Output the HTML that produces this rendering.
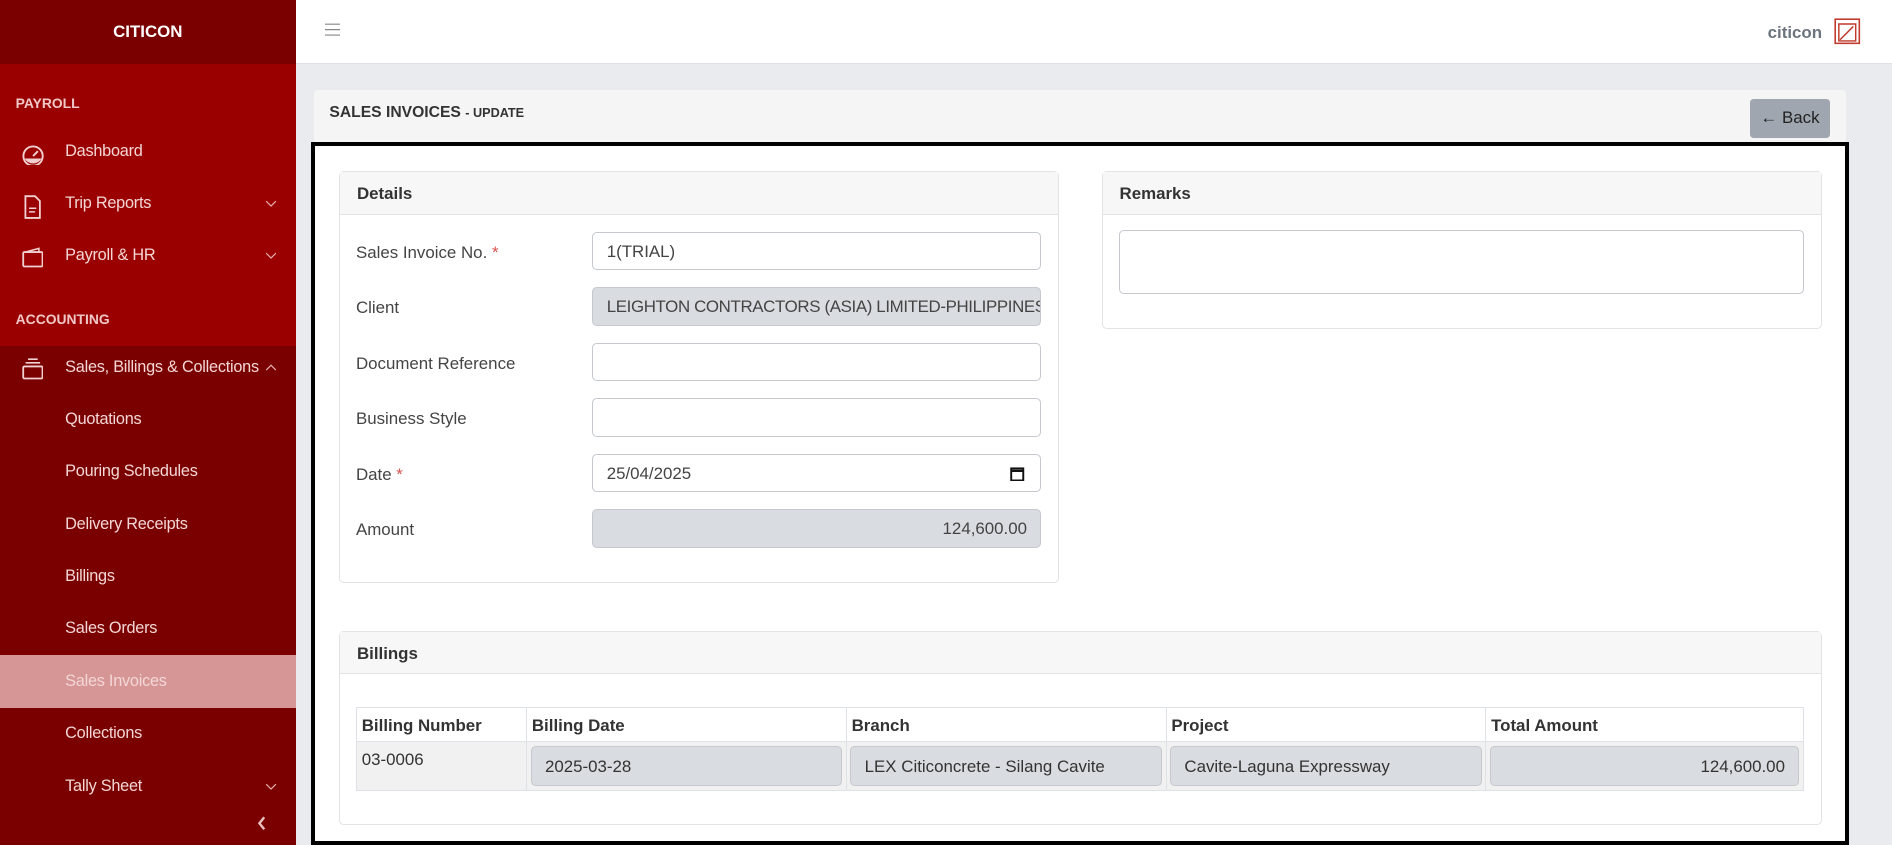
<!DOCTYPE html>
<html><head><meta charset="utf-8"><style>
*{box-sizing:border-box;margin:0;padding:0}
html,body{width:1892px;height:845px;overflow:hidden}
body{font-family:"Liberation Sans",sans-serif;background:#e9ebee;position:relative}
#w{zoom:1.2066;position:relative;width:1568px;height:700px}
.a{position:absolute}
.sb{left:0;top:0;width:245px;height:700px;background:#7a0000}
.sbh{left:0;top:0;width:245px;height:53px;background:#7a0000;color:#fff;font-weight:bold;font-size:14px;text-align:center;line-height:53px}
.sbr{left:0;top:53px;width:245px;height:234px;background:#9b0000}
.sec{color:#f0c8c8;font-weight:bold;font-size:11.5px;left:13px}
.it,.sub{color:#f3d6d6;font-size:13.5px;left:54px;letter-spacing:-0.2px}
.chev{left:220px}
.act{left:0;top:543px;width:245px;height:44px;background:#d69696}
.hdr{left:245px;top:0;width:1323px;height:53px;background:#fff;border-bottom:1px solid #dee2e6}
.ph{left:260px;top:75px;width:1270px;height:45px;background:#f5f5f5;border-radius:3px}
.bx{left:258px;top:118px;width:1274px;height:582px;border:4px solid #000;background:#fff}
.card{border:1px solid #e3e3e3;border-radius:4px;background:#fff}
.ch{background:#f7f7f7;border-bottom:1px solid #e3e3e3;height:35px;line-height:36px;padding-left:14px;font-weight:bold;font-size:14px;color:#333}
.lb{left:295px;font-size:14px;color:#444;margin-top:1px}
.in{left:491px;width:372px;height:32px;border:1px solid #c5c9ce;border-radius:4px;font-size:14px;color:#444;padding-left:11px;line-height:31px;white-space:nowrap;overflow:hidden;background:#fff}
.dis{background:#d9dce0}
.req{color:#d9534f}
table{border-collapse:collapse;font-size:14px;color:#333}
td,th{border:1px solid #dee2e6}
</style></head><body><div id="w">
<div class="a sb"></div>
<div class="a sbr"></div>
<div class="a sbh">CITICON</div>
<div class="a act"></div>
<div class="a sec" style="top:79px">PAYROLL</div>
<div class="a sec" style="top:258px">ACCOUNTING</div>
<svg class="a" style="left:17px;top:119px" width="20" height="18" viewBox="0 0 20 18"><circle cx="10" cy="10" r="8" fill="none" stroke="#f0d0d0" stroke-width="1.6"/><path d="M3 12h14a8 8 0 0 1-14 0z" fill="#f0d0d0"/><path d="M10 10l4-4" stroke="#f0d0d0" stroke-width="1.6"/></svg>
<svg class="a" style="left:19px;top:162px" width="16" height="20" viewBox="0 0 16 20"><path d="M2 1h8l4 4v14H2z" fill="none" stroke="#f0d0d0" stroke-width="1.5"/><path d="M5 11h6M5 14h5" stroke="#f0d0d0" stroke-width="1.3"/></svg>
<svg class="a" style="left:18px;top:204px" width="18" height="18" viewBox="0 0 18 18"><rect x="1" y="5" width="16" height="12" rx="1" fill="none" stroke="#f0d0d0" stroke-width="1.5"/><path d="M3 5l11-3v3" fill="none" stroke="#f0d0d0" stroke-width="1.3"/></svg>
<svg class="a" style="left:18px;top:297px" width="18" height="18" viewBox="0 0 18 18"><rect x="1" y="7" width="16" height="10" rx="1" fill="none" stroke="#f0d0d0" stroke-width="1.5"/><path d="M3 4h12M5 1h8" stroke="#f0d0d0" stroke-width="1.3"/></svg>
<div class="a it" style="top:118px">Dashboard</div>
<div class="a it" style="top:161px">Trip Reports</div>
<div class="a it" style="top:204px">Payroll &amp; HR</div>
<div class="a it" style="top:297px">Sales, Billings &amp; Collections</div>
<svg class="a chev" style="top:166px" width="10" height="6" viewBox="0 0 10 6"><path d="M1 1l4 4 4-4" fill="none" stroke="#e8b0b0" stroke-width="1"/></svg>
<svg class="a chev" style="top:209px" width="10" height="6" viewBox="0 0 10 6"><path d="M1 1l4 4 4-4" fill="none" stroke="#e8b0b0" stroke-width="1"/></svg>
<svg class="a chev" style="top:302px" width="10" height="6" viewBox="0 0 10 6"><path d="M1 5l4-4 4 4" fill="none" stroke="#e8b0b0" stroke-width="1"/></svg>
<svg class="a chev" style="top:649px" width="10" height="6" viewBox="0 0 10 6"><path d="M1 1l4 4 4-4" fill="none" stroke="#e8b0b0" stroke-width="1"/></svg>
<div class="a sub" style="top:340px">Quotations</div>
<div class="a sub" style="top:383px">Pouring Schedules</div>
<div class="a sub" style="top:427px">Delivery Receipts</div>
<div class="a sub" style="top:470px">Billings</div>
<div class="a sub" style="top:513px">Sales Orders</div>
<div class="a sub" style="top:557px">Sales Invoices</div>
<div class="a sub" style="top:600px">Collections</div>
<div class="a sub" style="top:644px">Tally Sheet</div>
<svg class="a" style="left:213px;top:676px" width="8" height="12" viewBox="0 0 8 12"><path d="M6 1L2 6l4 5" fill="none" stroke="#e8c0c0" stroke-width="2"/></svg>

<div class="a hdr"></div>
<svg class="a" style="left:269px;top:19px" width="13" height="11" viewBox="0 0 13 11"><path d="M0 1h13M0 5.5h13M0 10h13" stroke="#888" stroke-width="1"/></svg>
<div class="a" style="left:1465px;top:19px;color:#6c757d;font-weight:bold;font-size:14px">citicon</div>
<svg class="a" style="left:1520px;top:15px" width="22" height="22" viewBox="0 0 22 22"><rect x="1" y="1" width="20" height="20" fill="none" stroke="#c0392b" stroke-width="1.3"/><path d="M4 5h14v14H4z" fill="none" stroke="#c0392b" stroke-width="1.2"/><path d="M5 18L16 7" stroke="#c0392b" stroke-width="1.2"/></svg>

<div class="a ph"></div>
<div class="a" style="left:273px;top:86px;font-weight:bold;font-size:13px;color:#333">SALES INVOICES <span style="font-size:10.5px">- UPDATE</span></div>
<div class="a" style="left:1450px;top:82px;width:67px;height:32px;background:#a0a6b0;border-radius:3px;color:#222;font-size:14px;line-height:32px;text-align:center">&#8592; Back</div>

<div class="a bx"></div>
<div class="a card" style="left:281px;top:142px;width:597px;height:341px"><div class="ch">Details</div></div>
<div class="a lb" style="top:200px">Sales Invoice No. <span class="req">*</span></div>
<div class="a lb" style="top:246px">Client</div>
<div class="a lb" style="top:292px">Document Reference</div>
<div class="a lb" style="top:338px">Business Style</div>
<div class="a lb" style="top:384px">Date <span class="req">*</span></div>
<div class="a lb" style="top:430px">Amount</div>
<div class="a in" style="top:192px">1(TRIAL)</div>
<div class="a in dis" style="top:238px;letter-spacing:-0.3px">LEIGHTON CONTRACTORS (ASIA) LIMITED-PHILIPPINES BR</div>
<div class="a in" style="top:284px"></div>
<div class="a in" style="top:330px"></div>
<div class="a in" style="top:376px">25/04/2025<svg style="position:absolute;right:13px;top:9px" width="12" height="13" viewBox="0 0 12 13"><rect x="1" y="2" width="10" height="10" fill="none" stroke="#111" stroke-width="1.6"/><path d="M1 4h10" stroke="#111" stroke-width="2"/></svg></div>
<div class="a in dis" style="top:422px;text-align:right;padding-right:11px">124,600.00</div>

<div class="a card" style="left:913px;top:142px;width:597px;height:131px"><div class="ch">Remarks</div></div>
<div class="a" style="left:927px;top:191px;width:568px;height:53px;border:1px solid #c5c9ce;border-radius:4px"></div>

<div class="a card" style="left:281px;top:523px;width:1229px;height:161px"><div class="ch">Billings</div></div>
<table class="a" style="left:295px;top:586px;width:1200px">
<tr style="height:28px;background:#fff"><th style="width:141px;text-align:left;padding:2px 4px 0">Billing Number</th><th style="width:265px;text-align:left;padding:2px 4px 0">Billing Date</th><th style="width:265px;text-align:left;padding:2px 4px 0">Branch</th><th style="width:265px;text-align:left;padding:2px 4px 0">Project</th><th style="text-align:left;padding:2px 4px 0">Total Amount</th></tr>
<tr style="height:41px;background:#f1f1f1"><td style="vertical-align:top;padding:7px 4px">03-0006</td>
<td style="padding:3px"><div style="height:33px;background:#d9dce0;border:1px solid #c5c9ce;border-radius:4px;line-height:33px;padding-left:11px">2025-03-28</div></td>
<td style="padding:3px"><div style="height:33px;background:#d9dce0;border:1px solid #c5c9ce;border-radius:4px;line-height:33px;padding-left:11px">LEX Citiconcrete - Silang Cavite</div></td>
<td style="padding:3px"><div style="height:33px;background:#d9dce0;border:1px solid #c5c9ce;border-radius:4px;line-height:33px;padding-left:11px">Cavite-Laguna Expressway</div></td>
<td style="padding:3px"><div style="height:33px;background:#d9dce0;border:1px solid #c5c9ce;border-radius:4px;line-height:33px;padding-right:11px;text-align:right">124,600.00</div></td></tr>
</table>
</div></body></html>
